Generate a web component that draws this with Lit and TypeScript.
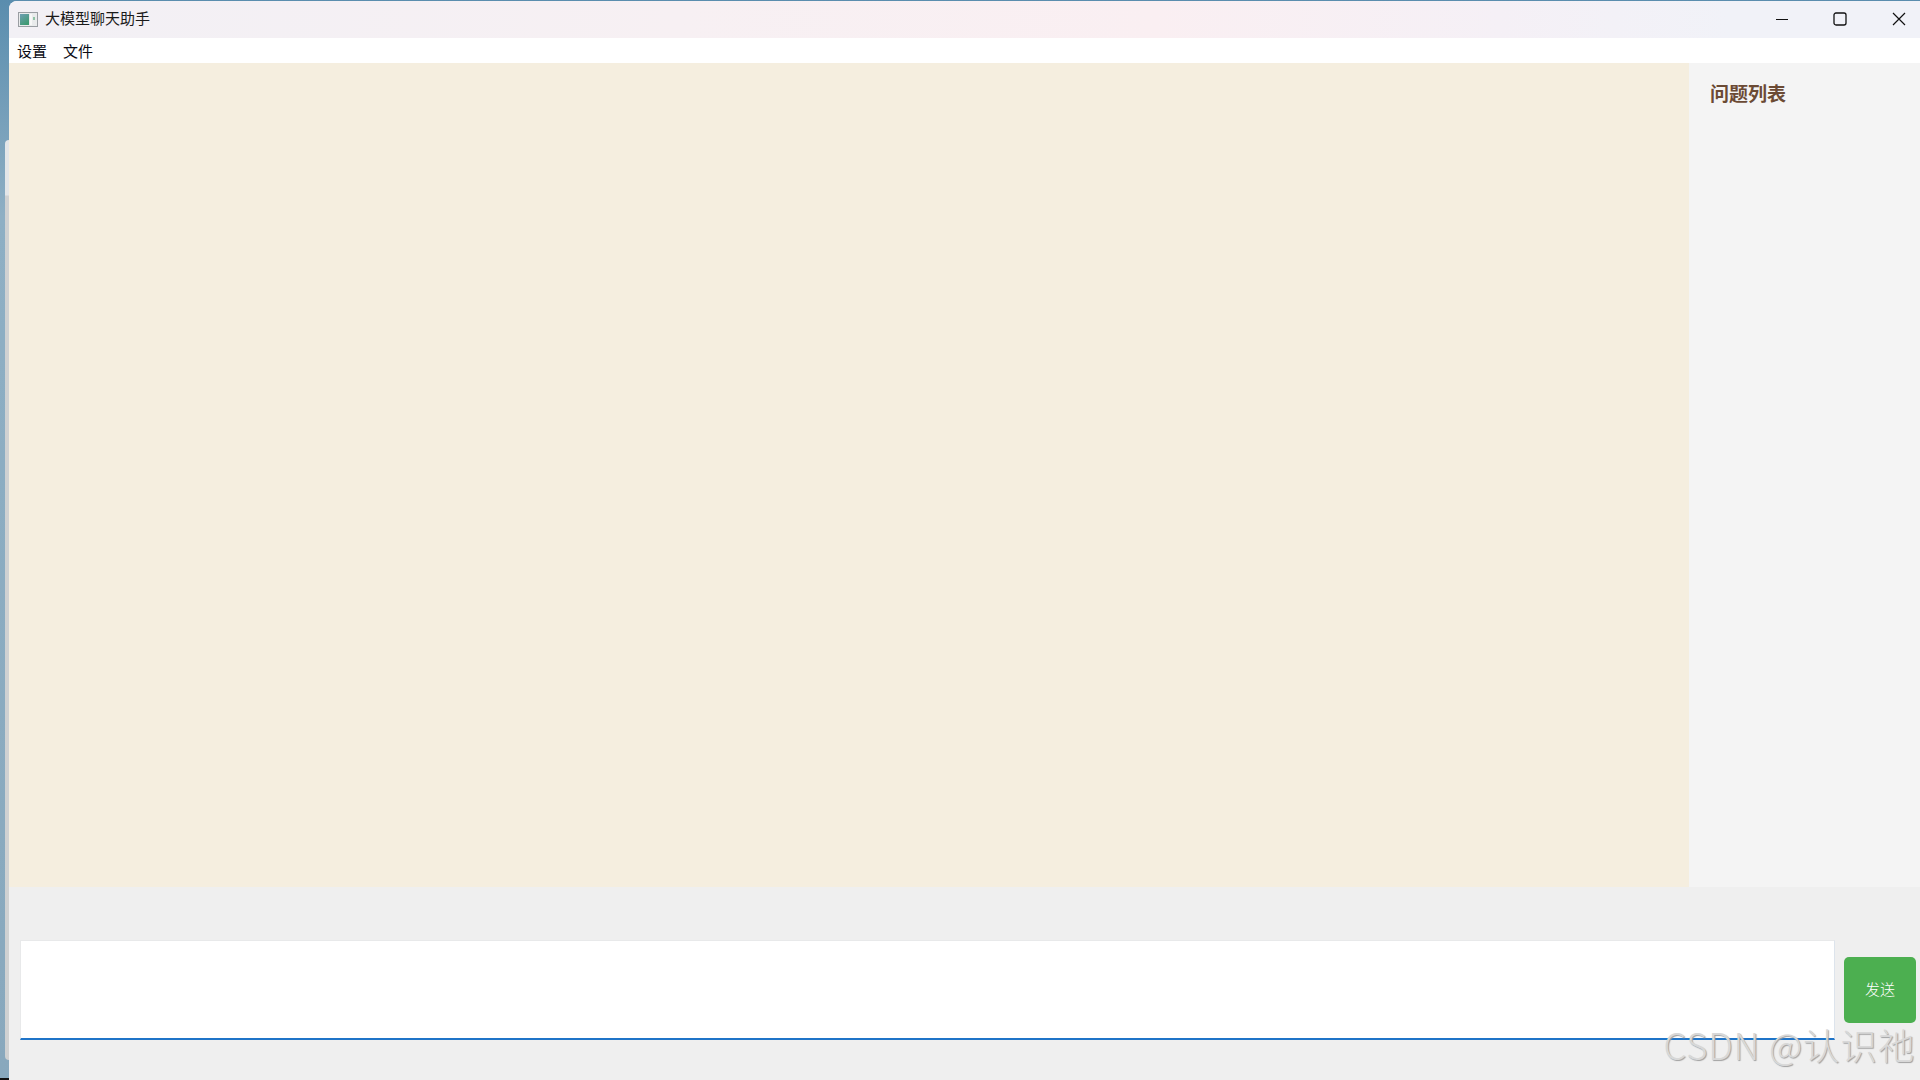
import { LitElement, html, css } from "lit";
import { customElement } from "lit/decorators.js";

@customElement("app-root")
export class AppRoot extends LitElement {
  static styles = css`
    :host {
      display: block;
      width: 1920px;
      height: 1080px;
      overflow: hidden;
      position: relative;
      font-family: "Noto Sans CJK SC", "Liberation Sans", sans-serif;
      color: #111;
    }
    .desktop {
      height: 100%;
      box-sizing: border-box;
      padding: 1px 0 0 9px;
      background: linear-gradient(180deg, #5a8dae 0%, #8eafc4 20%, #88a8bd 100%);
      position: relative;
    }
    .sliver {
      position: absolute;
      left: 5px;
      top: 140px;
      width: 4px;
      height: 920px;
      border-radius: 4px 0 0 4px;
      background: linear-gradient(180deg, #e3e6e8 0, #e3e6e8 55px, #cfd1d2 56px, #cfd1d2 100%);
    }
    .floor {
      position: absolute;
      left: 0;
      bottom: 0;
      width: 9px;
      height: 2px;
      background: #111;
    }
    .window {
      position: relative;
      height: 100%;
      border-top-left-radius: 8px;
      overflow: hidden;
      display: flex;
      flex-direction: column;
      background: #fff;
    }
    .titlebar {
      height: 37px;
      flex: none;
      box-sizing: border-box;
      display: flex;
      align-items: center;
      padding: 0 0 3px 9px;
      background: linear-gradient(90deg, #f2f0f5 0%, #f7f0f3 35%, #faeff2 60%, #f5f0f6 78%, #f1f2f8 90%, #f1f2f8 100%);
    }
    .appicon {
      flex: none;
      width: 20px;
      height: 15px;
      margin: 2px 7px 0 0;
      display: block;
    }
    .title {
      font-size: 15px;
      line-height: 20px;
      color: #1a1a1a;
    }
    .controls {
      margin-left: auto;
      margin-right: -7px;
      padding-top: 1px;
      display: flex;
      height: 100%;
      box-sizing: border-box;
    }
    .ctl {
      width: 58px;
      display: flex;
      align-items: center;
      justify-content: center;
    }
    .ctl svg {
      width: 14px;
      height: 14px;
      display: block;
    }
    .ctl.close svg {
      margin-left: 2px;
    }
    .menubar {
      height: 25px;
      flex: none;
      display: flex;
      gap: 16px;
      align-items: center;
      padding-left: 8px;
      background: #fff;
      font-size: 15px;
      color: #0b0b14;
    }
    .content {
      height: 824px;
      flex: none;
      display: flex;
    }
    .chat {
      flex: 1;
      background: #f5eedf;
    }
    .side {
      width: 231px;
      flex: none;
      box-sizing: border-box;
      padding: 19px 21px;
      background: #f4f4f4;
    }
    .side h2 {
      margin: 0;
      font-family: "Liberation Serif", "Noto Sans CJK SC", serif;
      font-size: 19px;
      line-height: 26px;
      font-weight: 700;
      color: #6b4a34;
    }
    .composer {
      flex: 1;
      display: flex;
      align-items: center;
      gap: 9px;
      padding: 0 4px 0 11px;
      background: #efefef;
    }
    .input {
      flex: 1;
      height: 100px;
      margin-top: 12px;
      box-sizing: border-box;
      background: #fff;
      border: 1px solid #e8e9ea;
      border-right-color: #dde4ec;
      border-bottom: 2px solid #1f74c8;
    }
    .send {
      flex: none;
      width: 72px;
      height: 66px;
      margin-top: 12px;
      padding-bottom: 2px;
      box-sizing: border-box;
      border-radius: 5px;
      background: #4caf50;
      color: #fff;
      display: flex;
      align-items: center;
      justify-content: center;
      font-size: 15px;
      font-weight: 300;
    }
    .mark {
      position: absolute;
      right: 5px;
      bottom: 15px;
      font-size: 36.5px;
      line-height: 40px;
      letter-spacing: 0.8px;
      color: #d8d8d8;
      text-shadow: 1px 1px 1px #a0a0a0;
      white-space: nowrap;
      font-weight: 300;
    }
  `;

  render() {
    return html`
      <div class="desktop">
        <div class="sliver"></div>
        <div class="floor"></div>
        <div class="window">
          <div class="titlebar">
            <svg class="appicon" viewBox="0 0 20 15">
              <defs>
                <linearGradient id="g" x1="0" y1="0" x2="0.6" y2="1">
                  <stop offset="0" stop-color="#6f9fb4" />
                  <stop offset="1" stop-color="#3f9a72" />
                </linearGradient>
              </defs>
              <rect x="0.5" y="0.5" width="19" height="14" fill="#e9ebec" stroke="#9a9ea3" />
              <rect x="2" y="2" width="9" height="11" fill="url(#g)" />
              <rect x="12" y="2" width="2" height="11" fill="#f7f7f7" />
              <rect x="15" y="5" width="2" height="3" fill="#8fc4a6" />
            </svg>
            <span class="title">大模型聊天助手</span>
            <div class="controls">
              <div class="ctl">
                <svg viewBox="0 0 14 14"><path d="M1 7.5h12" stroke="#111" stroke-width="1.2" fill="none" /></svg>
              </div>
              <div class="ctl">
                <svg viewBox="0 0 14 14"><rect x="1" y="1" width="12" height="12" rx="2" stroke="#111" stroke-width="1.3" fill="none" /></svg>
              </div>
              <div class="ctl close">
                <svg viewBox="0 0 14 14"><path d="M1 1l12 12M13 1L1 13" stroke="#111" stroke-width="1.2" fill="none" /></svg>
              </div>
            </div>
          </div>
          <div class="menubar"><span>设置</span><span>文件</span></div>
          <div class="content">
            <div class="chat"></div>
            <div class="side"><h2>问题列表</h2></div>
          </div>
          <div class="composer">
            <div class="input"></div>
            <div class="send">发送</div>
          </div>
        </div>
        <div class="mark">CSDN @认识祂</div>
      </div>
    `;
  }
}
